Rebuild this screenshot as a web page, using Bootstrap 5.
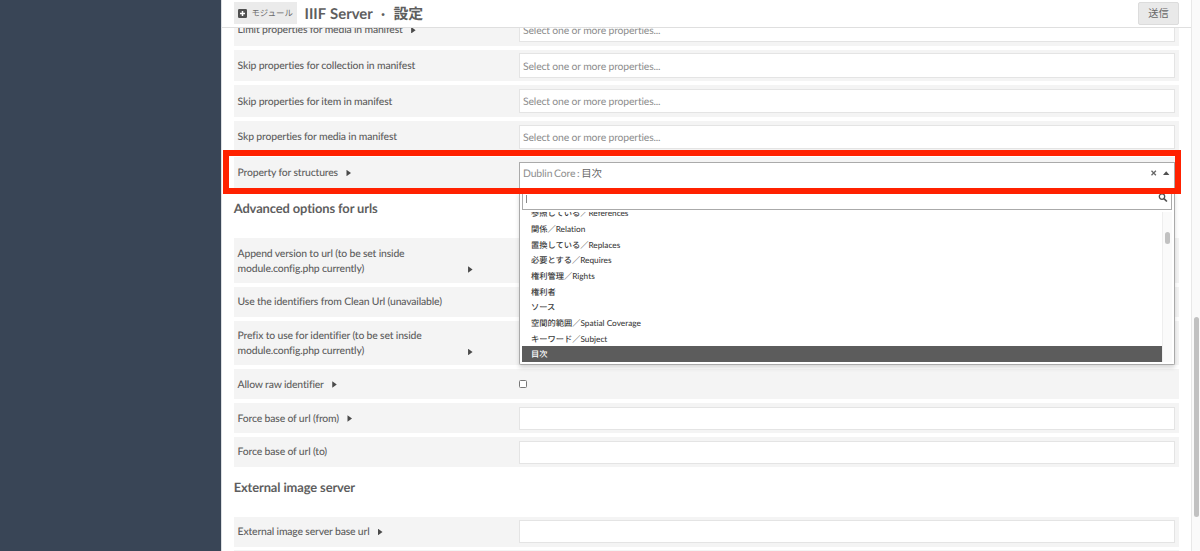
<!DOCTYPE html>
<html lang="ja">
<head>
<meta charset="utf-8">
<title>IIIF Server · 設定</title>
<link rel="stylesheet" href="https://cdn.jsdelivr.net/npm/bootstrap@5.3.0/dist/css/bootstrap.min.css">
<style>
html, body { height: 551px; overflow: hidden; }
body { font-family: Lato, "Noto Sans CJK JP", sans-serif; font-size: 10.4px; line-height: 15px; color: #5e5e5e; background: #fff; text-rendering: geometricPrecision; font-variant-ligatures: none; }
.side-bar { width: 221px; background: #394556; }
.page-main { border-left: 1px solid #dcdfe2; }
.top-bar { height: 28px; padding: 0 12px 0 12px; border-bottom: 1px solid #dfdfdf; background: #fff; }
.crumb { width: 63px; height: 22px; padding: 0 4px; background: #ebebeb; font-size: 8.4px; gap: 4.5px; margin-top: -1px; color: #6c6c6c; white-space: nowrap; }
.page-title { font-size: 14.9px; line-height: 20px; font-weight: 700; margin-left: 7.5px; white-space: pre; word-spacing: .6px; }
.send-btn { width: 41px; height: 23px; padding: 0; font-size: 10.2px; line-height: 20px; color: #676767; background: #e9e9e9; border: 1px solid #dcdcdc; border-radius: 2px; margin-top: -1px; }
.form-area { padding: 0 12.5px 0 11.7px; }
.fields { margin-top: -14px; gap: 3.9px; }
.field-row { background: #f4f4f4; padding: 3.9px; flex: none; position: relative; }
.h-select { height: 31.8px; }
.h-text { height: 30px; }
.h-double { height: 44.8px; }
.field-label { width: 281px; padding-right: 46px; padding-top: 1.6px; flex: none; letter-spacing: -.16px; font-weight: 500; }
.h-double .field-label { padding-top: 2.6px; }
.field-label span { width: 190px; }
.field-label.one span { width: auto; white-space: nowrap; }
.tri { width: 4.5px; height: 6.5px; flex: none; margin: -1px 0 0 8.5px; background: #4a4a4a; clip-path: polygon(0 0, 100% 50%, 0 100%); }
.box { background: #fff; border: 1px solid #e4e4e4; }
.pick { height: 24.4px; padding: 5.4px 3.5px 0; line-height: 15px; color: #8d8d8d; letter-spacing: -.16px; }
.entry { height: 23px; }
.section-title { height: 49.5px; margin: -3.9px 0; padding-top: 9.5px; font-size: 12.9px; line-height: 20px; font-weight: 700; letter-spacing: -.11px; flex: none; }
.pick-open { border-color: #aaa; height: 29px; padding-top: 4.5px; margin-top: 1px; align-self: flex-start; position: relative; }
.pick-open > span { word-spacing: -.7px; }
.drop { position: absolute; z-index: 3; top: 28px; left: -1px; right: -1px; height: 174px; background: #fff; border: 1px solid #aaa; border-top: 0; box-shadow: 0 3px 4px rgba(0,0,0,.15); padding: 0 2px 2px 2px; border-radius: 0 0 2px 2px; letter-spacing: 0; }
.find { height: 19px; border: 1px solid #aaa; padding: 3px 3px; }
.find svg { margin-top: -2px; }
.caret-bar { width: 1px; height: 8px; background: #888; }
.results { margin-top: 2px; height: 150.6px; }
.result-list { line-height: 16.6px; font-size: 8.25px; color: #3d3d3d; font-weight: 500; margin-top: -6.4px; }
.result-list div { padding-left: 9.3px; height: 15.67px; white-space: nowrap; }
.result-list .chosen { background: #5c5c5c; color: #fff; }
.list-track { width: 10px; background: #fafafa; border-left: 1px solid #eee; padding: 20px 2px 0; }
.list-thumb { width: 5px; height: 12px; border-radius: 3px; background: #c1c1c1; }
.tick-box { width: 8px; height: 8px; border: 1px solid #777; border-radius: 1.5px; background: #fff; }
.red-frame { position: absolute; z-index: 5; left: 223px; top: 150px; width: 957.5px; height: 43.6px; border: 6.5px solid #ff2100; }
.page-track { width: 9px; background: #fafafa; border-left: 1px solid #e8e8e8; padding: 317px 0 0 2px; }
.page-thumb { width: 5px; height: 200px; border-radius: 3px; background: #c1c1c1; }
.picked-term { color: #666; }
</style>
<script src="https://cdn.jsdelivr.net/npm/bootstrap@5.3.0/dist/js/bootstrap.bundle.min.js"></script>
</head>
<body>
<div class="d-flex h-100 position-relative">
  <aside class="side-bar flex-shrink-0"></aside>
  <main class="page-main flex-grow-1 d-flex flex-column overflow-hidden">
    <header class="top-bar d-flex align-items-center flex-shrink-0">
      <div class="crumb d-flex align-items-center">
        <svg width="9" height="9" viewBox="0 0 9 9" class="flex-shrink-0"><rect width="9" height="9" rx="1.2" fill="#505050"/><path d="M4.5 2v5M2 4.5h5" stroke="#fff" stroke-width="1.5"/></svg>
        <span>モジュール</span>
      </div>
      <h1 class="page-title mb-0">IIIF Server  ·  設定</h1>
      <button class="btn send-btn ms-auto">送信</button>
    </header>
    <div class="form-area flex-grow-1 overflow-hidden">
      <div class="fields d-flex flex-column">
        <div class="field-row h-select d-flex align-items-center">
          <div class="field-label one d-flex align-items-center"><span>Limit properties for media in manifest</span><i class="tri"></i></div>
          <div class="box pick flex-grow-1">Select one or more properties...</div>
        </div>
        <div class="field-row h-select d-flex align-items-center">
          <div class="field-label one"><span>Skip properties for collection in manifest</span></div>
          <div class="box pick flex-grow-1">Select one or more properties...</div>
        </div>
        <div class="field-row h-select d-flex align-items-center">
          <div class="field-label one"><span>Skip properties for item in manifest</span></div>
          <div class="box pick flex-grow-1">Select one or more properties...</div>
        </div>
        <div class="field-row h-select d-flex align-items-center">
          <div class="field-label one"><span>Skp properties for media in manifest</span></div>
          <div class="box pick flex-grow-1">Select one or more properties...</div>
        </div>
        <div class="field-row h-select d-flex align-items-center">
          <div class="field-label one d-flex align-items-center"><span>Property for structures</span><i class="tri"></i></div>
          <div class="box pick pick-open flex-grow-1 d-flex">
            <span>Dublin Core : <span class="picked-term">目次</span></span>
            <svg class="ms-auto" width="21" height="13" viewBox="0 0 21 13"><path d="M2.5 3.8l4.4 4.4M6.9 3.8l-4.4 4.4" stroke="#666" stroke-width="1.3"/><path d="M14 8l3.2-3.7 3.2 3.7z" fill="#505050"/></svg>
            <div class="drop">
              <div class="find d-flex justify-content-between">
                <span class="caret-bar"></span>
                <svg width="10" height="10" viewBox="0 0 10 10"><circle cx="4" cy="3.6" r="2.7" fill="none" stroke="#505050" stroke-width="1.3"/><path d="M6 5.6l2.9 2.9" stroke="#505050" stroke-width="1.7"/></svg>
              </div>
              <div class="results d-flex overflow-hidden">
                <div class="result-list flex-grow-1">
                  <div>参照している／References</div>
                  <div>関係／Relation</div>
                  <div>置換している／Replaces</div>
                  <div>必要とする／Requires</div>
                  <div>権利管理／Rights</div>
                  <div>権利者</div>
                  <div>ソース</div>
                  <div>空間的範囲／Spatial Coverage</div>
                  <div>キーワード／Subject</div>
                  <div class="chosen">目次</div>
                </div>
                <div class="list-track"><div class="list-thumb"></div></div>
              </div>
            </div>
          </div>
        </div>
        <h2 class="section-title">Advanced options for urls</h2>
        <div class="field-row h-double d-flex align-items-center">
          <div class="field-label d-flex align-items-end justify-content-between"><span>Append version to url (to be set inside module.config.php currently)</span><i class="tri mb-1"></i></div>
        </div>
        <div class="field-row h-text d-flex align-items-center">
          <div class="field-label one"><span>Use the identifiers from Clean Url (unavailable)</span></div>
        </div>
        <div class="field-row h-double d-flex align-items-center">
          <div class="field-label d-flex align-items-end justify-content-between"><span>Prefix to use for identifier (to be set inside module.config.php currently)</span><i class="tri mb-1"></i></div>
        </div>
        <div class="field-row h-text d-flex align-items-center">
          <div class="field-label one d-flex align-items-center"><span>Allow raw identifier</span><i class="tri"></i></div>
          <span class="tick-box"></span>
        </div>
        <div class="field-row h-text d-flex align-items-center">
          <div class="field-label one d-flex align-items-center"><span>Force base of url (from)</span><i class="tri"></i></div>
          <div class="box entry flex-grow-1"></div>
        </div>
        <div class="field-row h-text d-flex align-items-center">
          <div class="field-label one"><span>Force base of url (to)</span></div>
          <div class="box entry flex-grow-1"></div>
        </div>
        <h2 class="section-title">External image server</h2>
        <div class="field-row h-text d-flex align-items-center">
          <div class="field-label one d-flex align-items-center"><span>External image server base url</span><i class="tri"></i></div>
          <div class="box entry flex-grow-1"></div>
        </div>
        <div class="field-row h-text"></div>
      </div>
    </div>
  </main>
  <div class="page-track flex-shrink-0"><div class="page-thumb"></div></div>
  <div class="red-frame"></div>
</div>
</body>
</html>
